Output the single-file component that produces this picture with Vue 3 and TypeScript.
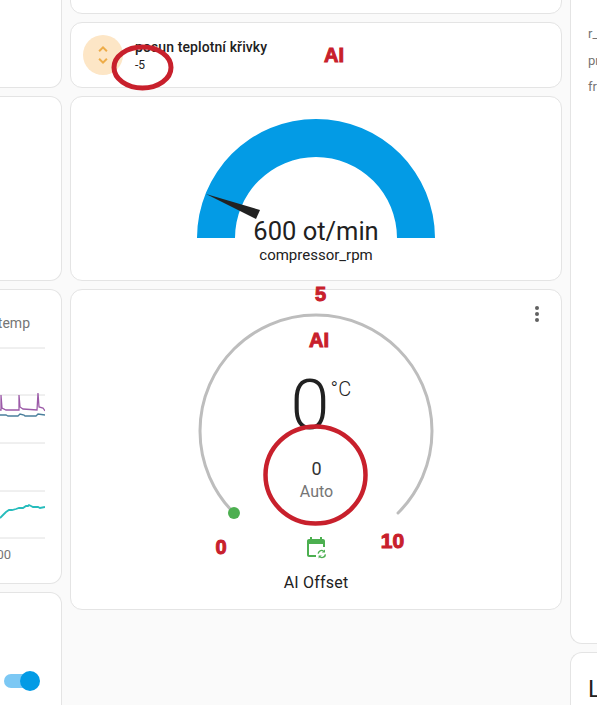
<script setup lang="ts">
const gridLines = [348, 395, 443, 491, 538]

const purpleLine = '0,410 1,410 1,395 2,408 6,410 19,410 19,395 20,407 23,409 37,410 38,393 39,407 43,408 45,411'
const blueLine = '0,415 6,415 8,416 18,416 20,414 24,415 25,416 36,416 38,414 45,415'
const tealLine = '0,518 3,515 6,512 9,510 12,510 16,509 19,508 23,508 26,506 28,506 29,505 31,506 33,507 38,507 40,508 45,507'

const dialRadius = 116
const dialCx = 120
const dialCy = 119
const dialOffset = dialRadius * Math.SQRT1_2
const dialPath = `M ${dialCx - dialOffset} ${dialCy + dialOffset} A ${dialRadius} ${dialRadius} 0 1 1 ${dialCx + dialOffset} ${dialCy + dialOffset}`

const notes = [
  { text: 'AI', x: 334, y: 55, size: 20 },
  { text: '5', x: 320.5, y: 294, size: 20 },
  { text: 'AI', x: 319, y: 340, size: 20 },
  { text: '0', x: 221, y: 547, size: 20 },
  { text: '10', x: 392.5, y: 541, size: 21 }
]
</script>

<template>
  <main class="page">
    <section class="col col-left">
      <div class="card left-top"></div>
      <div class="card left-blank"></div>
      <div class="card left-chart">
        <div class="chart-title">temp</div>
        <svg class="chart" width="45" height="208" viewBox="0 340 45 208">
          <line v-for="y in gridLines" :key="y" x1="0" x2="45" :y1="y" :y2="y" stroke="#e0e0e0" />
          <polyline :points="purpleLine" fill="none" stroke="#9c5aa8" stroke-width="1.3" />
          <polyline :points="blueLine" fill="none" stroke="#4a7f9c" stroke-width="1.3" />
          <polyline :points="tealLine" fill="none" stroke="#26bcbc" stroke-width="1.8" />
        </svg>
        <div class="chart-tick">00</div>
      </div>
      <div class="card left-switch">
        <div class="switch"><span class="switch-thumb"></span></div>
      </div>
    </section>

    <section class="col col-mid">
      <div class="card mid-top"></div>

      <div class="card tile">
        <div class="tile-icon">
          <svg width="24" height="24" viewBox="0 0 24 24">
            <path fill="#eeac48" d="M12,18.17L8.83,15L7.41,16.41L12,21L16.59,16.41L15.17,15M12,5.83L15.17,9L16.59,7.59L12,3L7.41,7.59L8.83,9L12,5.83Z" />
          </svg>
        </div>
        <div class="tile-text">
          <div class="tile-name">posun teplotní křivky</div>
          <div class="tile-state">-5</div>
        </div>
      </div>

      <div class="card gauge">
        <svg class="gauge-svg" width="238" height="119" viewBox="0 0 238 119">
          <path fill="#039be5" d="M0 119 A119 119 0 0 1 238 119 H200 A81 81 0 0 0 38 119 Z" />
          <path fill="#222" d="M9 75 L63 91 L59 100 Z" />
        </svg>
        <div class="gauge-value">600 ot/min</div>
        <div class="gauge-name">compressor_rpm</div>
      </div>

      <div class="card thermostat">
        <button class="menu" aria-label="menu">
          <span></span><span></span><span></span>
        </button>
        <div class="dial">
          <svg width="240" height="208" viewBox="0 0 240 208">
            <path :d="dialPath" fill="none" stroke="#bdbdbd" stroke-width="3" stroke-linecap="round" />
            <circle :cx="dialCx - dialOffset" :cy="dialCy + dialOffset" r="6" fill="#4caf50" />
          </svg>
          <div class="dial-info">
            <div class="dial-temp">
              <span class="dial-big">0</span>
              <span class="dial-unit">°C</span>
            </div>
            <div class="dial-current">0</div>
            <div class="dial-mode">Auto</div>
          </div>
        </div>
        <svg class="mode-icon" width="24" height="24" viewBox="0 0 24 24" fill="#4caf50">
          <path d="M6 1V3H5C3.9 3 3 3.9 3 5V19C3 20.1 3.9 21 5 21H12V19H5V8H19V11H21V5C21 3.9 20.1 3 19 3H18V1H16V3H8V1H6Z" />
          <path d="M14.2 17.6a3.4 3.4 0 0 1 5.3-2.6" fill="none" stroke="#4caf50" stroke-width="1.4" />
          <path d="M21 13.4V16.6H17.8Z" />
          <path d="M21.4 18.4a3.4 3.4 0 0 1-5.3 2.6" fill="none" stroke="#4caf50" stroke-width="1.4" />
          <path d="M14.6 22.6V19.4H17.8Z" />
        </svg>
        <div class="thermostat-name">AI Offset</div>
      </div>
    </section>

    <section class="col col-right">
      <div class="card right-main">
        <div class="attr">r_</div>
        <div class="attr">pr</div>
        <div class="attr">fro</div>
      </div>
      <div class="card right-next">L</div>
    </section>

    <!-- red marks drawn over the screenshot -->
    <svg class="marks" width="597" height="705" viewBox="0 0 597 705">
      <ellipse cx="142.5" cy="67.5" rx="28.5" ry="20.5" fill="none" stroke="#c8202c" stroke-width="5" />
      <ellipse cx="315.5" cy="475" rx="50" ry="48.5" fill="none" stroke="#c8202c" stroke-width="4.5" />
    </svg>
    <span
      v-for="n in notes"
      :key="n.text + n.x"
      class="note"
      :style="{ left: n.x + 'px', top: n.y + 'px', fontSize: n.size + 'px' }"
    >{{ n.text }}</span>
  </main>
</template>

<style>
html,
body {
  margin: 0;
  background: #fafafa;
}
</style>

<style scoped>
* {
  box-sizing: border-box;
}

.page {
  position: relative;
  display: flex;
  gap: 8px;
  width: 597px;
  height: 705px;
  overflow: hidden;
  background: #fafafa;
  color: #212121;
  font-family: Roboto, "Liberation Sans", sans-serif;
}

.col {
  display: flex;
  flex-direction: column;
  gap: 8px;
  flex: none;
}

.col-left {
  width: 62px;
  margin-top: -13px;
}

.col-mid {
  width: 492px;
  margin-top: -47px;
}

.col-right {
  width: 80px;
  margin-top: -20px;
  flex: none;
  margin-right: -60px;
}

.card {
  flex: none;
  background: #fff;
  border: 1px solid #e4e4e4;
  border-radius: 12px;
}

.col-left .card {
  border-left: none;
  border-radius: 0 12px 12px 0;
}

.col-right .card {
  border-right: none;
  border-radius: 12px 0 0 12px;
}

.left-top {
  height: 101px;
}

.left-blank {
  height: 185px;
}

.left-chart {
  height: 295px;
  padding-top: 23px;
}

.chart-title {
  width: 30px;
  font-size: 14px;
  line-height: 20px;
  color: #757575;
  text-align: right;
  white-space: nowrap;
  direction: rtl;
}

.chart {
  display: block;
  margin-top: 7px;
}

.chart-tick {
  width: 11px;
  overflow: hidden;
  font-size: 13px;
  line-height: 14px;
  color: #757575;
  white-space: nowrap;
  direction: rtl;
}

.left-switch {
  height: 200px;
  padding: 81px 0 0 4px;
}

.switch {
  position: relative;
  width: 28px;
  height: 14px;
  border-radius: 7px;
  background: #7cc8f4;
}

.switch-thumb {
  position: absolute;
  top: -3px;
  right: -8px;
  width: 20px;
  height: 20px;
  border-radius: 50%;
  background: #039be5;
}

.mid-top {
  height: 61px;
}

.tile {
  display: flex;
  align-items: center;
  gap: 12px;
  height: 66px;
  padding: 0 12px;
}

.tile-icon {
  display: flex;
  align-items: center;
  justify-content: center;
  width: 40px;
  height: 40px;
  border-radius: 50%;
  background: #fde6c6;
}

.tile-text {
  margin-top: -1px;
}

.tile-name {
  font-size: 14px;
  font-weight: 500;
  line-height: 20px;
  letter-spacing: 0.1px;
}

.tile-state {
  font-size: 12px;
  line-height: 16px;
}

.gauge {
  height: 185px;
  padding-top: 22px;
  text-align: center;
}

.gauge-svg {
  display: block;
  margin: 0 auto;
}

.gauge-value {
  position: relative;
  margin-top: -19px;
  font-size: 25.5px;
  line-height: 25px;
}

.gauge-name {
  margin-top: 1px;
  font-size: 15px;
  line-height: 20px;
}

.thermostat {
  position: relative;
  display: flex;
  flex-direction: column;
  align-items: center;
  height: 321px;
  padding-top: 22px;
}

.menu {
  position: absolute;
  top: 16px;
  right: 22px;
  display: flex;
  flex-direction: column;
  gap: 2px;
  padding: 0;
  border: none;
  background: none;
}

.menu span {
  width: 4px;
  height: 4px;
  border-radius: 50%;
  background: #616161;
}

.dial {
  position: relative;
  width: 240px;
  height: 208px;
}

.dial-info {
  position: absolute;
  inset: 0;
  display: flex;
  flex-direction: column;
  align-items: center;
}

.dial-temp {
  position: relative;
  margin-top: 58px;
  margin-left: -12px;
  font-size: 70px;
  font-weight: 300;
  line-height: 70px;
}

.dial-unit {
  position: absolute;
  top: 7px;
  left: 40px;
  font-size: 20px;
  line-height: 24px;
}

.dial-current {
  margin-top: 17px;
  margin-left: 1px;
  font-size: 18px;
  line-height: 24px;
  color: #333;
}

.dial-mode {
  margin-left: 1px;
  font-size: 16px;
  line-height: 22px;
  color: #757575;
}

.mode-icon {
  display: block;
  margin-top: 16px;
}

.thermostat-name {
  margin-top: 11px;
  font-size: 16px;
  line-height: 24px;
  letter-spacing: 0.2px;
}

.right-main {
  height: 664px;
  padding: 43px 0 0 17px;
  font-size: 13px;
  color: #757575;
}

.attr {
  height: 26.5px;
  line-height: 20px;
}

.right-next {
  height: 100px;
  padding: 20px 0 0 17px;
  font-size: 24px;
  line-height: 32px;
}

.marks {
  position: absolute;
  left: 0;
  top: 0;
  pointer-events: none;
}

.note {
  position: absolute;
  transform: translate(-50%, -50%);
  font-family: "Liberation Sans", sans-serif;
  font-weight: 700;
  color: #c8202c;
  -webkit-text-stroke: 1px #c8202c;
}
</style>
